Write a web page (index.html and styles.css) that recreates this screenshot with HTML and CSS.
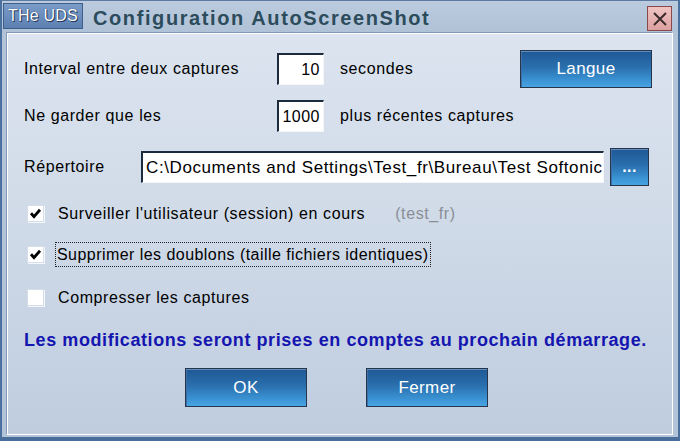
FILE: index.html
```html
<!DOCTYPE html>
<html lang="fr">
<head>
<meta charset="utf-8">
<title>Configuration AutoScreenShot</title>
<link rel="stylesheet" href="styles.css">
</head>
<body>
<div class="window">
  <div class="titlebar">
    <div class="tab">THe UDS</div>
    <div class="title">Configuration AutoScreenShot</div>
    <div class="close">
      <svg width="16" height="16" viewBox="0 0 16 16"><path d="M2 2 L14 14 M14 2 L2 14" stroke="#3a2a2a" stroke-width="2" fill="none"/></svg>
    </div>
  </div>
  <div class="client">
    <div class="row r1">
      <span class="label w1">Interval entre deux captures</span>
      <span class="field num">10</span>
      <span class="label after">secondes</span>
      <button class="btn langue">Langue</button>
    </div>
    <div class="row r2">
      <span class="label w1">Ne garder que les</span>
      <span class="field num">1000</span>
      <span class="label after">plus récentes captures</span>
    </div>
    <div class="row r3">
      <span class="label w2">Répertoire</span>
      <span class="field path">C:\Documents and Settings\Test_fr\Bureau\Test Softonic</span>
      <button class="btn dots">...</button>
    </div>
    <div class="row cb c1">
      <span class="box"><svg width="13" height="13" viewBox="0 0 13 13"><path d="M2 6.2 L5 9.6 L11 2.8" stroke="#000" stroke-width="2.8" fill="none"/></svg></span>
      <span class="label cbl">Surveiller l'utilisateur (session) en cours</span>
      <span class="label user">(test_fr)</span>
    </div>
    <div class="row cb c2">
      <span class="box"><svg width="13" height="13" viewBox="0 0 13 13"><path d="M2 6.2 L5 9.6 L11 2.8" stroke="#000" stroke-width="2.8" fill="none"/></svg></span>
      <span class="label cbl focus">Supprimer les doublons (taille fichiers identiques)</span>
    </div>
    <div class="row cb c3">
      <span class="box"></span>
      <span class="label cbl">Compresser les captures</span>
    </div>
    <div class="row note">Les modifications seront prises en comptes au prochain démarrage.</div>
    <div class="row actions">
      <button class="btn action">OK</button>
      <button class="btn action">Fermer</button>
    </div>
  </div>
</div>
</body>
</html>
```
FILE: styles.css
```css
html, body {
  margin: 0;
  padding: 0;
  background: #b3c4d9;
}
.window {
  width: 680px;
  height: 441px;
  box-sizing: border-box;
  background: #b3c4d9;
  border-left: 2px solid #4a70a0;
  border-right: 2px solid #4a70a0;
  border-top: 1px solid #5a7aa2;
  border-bottom: 4px solid #4a6e9c;
  display: flex;
  flex-direction: column;
  font-family: "Liberation Sans", Arial, sans-serif;
}
.titlebar {
  height: 31px;
  flex: none;
  display: flex;
  align-items: flex-start;
  background: linear-gradient(#bccbde, #b0c2d7);
}
.tab {
  margin: 2px 0 0 1px;
  width: 80px;
  height: 26px;
  box-sizing: border-box;
  border: 1px solid #3e5f8c;
  background: linear-gradient(#7b9cc8, #5d80b2);
  color: #fff;
  font-size: 16px;
  line-height: 24px;
  text-align center;
  text-align: center;
  text-shadow: 0 0 1px #1d3050, 1px 1px 0 #24395c;
  letter-spacing: 0.2px;
}
.title {
  margin: 4px 0 0 10px;
  font-size: 20px;
  font-weight: bold;
  letter-spacing: 1.6px;
  color: #2c4c5c;
  line-height: 26px;
}
.close {
  margin: 5px 0 0 auto;
  margin-right: 6px;
  width: 25px;
  height: 25px;
  box-sizing: border-box;
  border: 1px solid #8a4848;
  background: linear-gradient(#f0c4c4, #dca0a0);
  display: flex;
  align-items: center;
  justify-content: center;
}
.client {
  flex: 1;
  margin: 0 5px 2px 4px;
  border: 1px solid #7f97b8;
  border-right-color: #fff;
  border-bottom-color: #fff;
  box-shadow: inset 1px 1px 0 #fff;
  background: linear-gradient(#dbe4ef, #d2dce9 40%, #bfcddf);
  padding: 0 20px 0 17px;
  display: flex;
  flex-direction: column;
}
.row {
  display: flex;
  align-items: center;
}
.label {
  font-size: 16px;
  letter-spacing: 0.6px;
  color: #000;
  white-space: nowrap;
}
.w1 { width: 253px; flex: none; }
.w2 { width: 117px; flex: none; }
.after { margin-left: 16px; }
.field {
  box-sizing: border-box;
  background: #fff;
  border-top: 2px solid #1c2a3e;
  border-left: 2px solid #1c2a3e;
  border-right: 1px solid #f4f6fa;
  border-bottom: 1px solid #f4f6fa;
  font-size: 16px;
  letter-spacing: 0.5px;
  white-space: nowrap;
  overflow: hidden;
}
.num {
  width: 47px;
  height: 32px;
  line-height: 30px;
  text-align: right;
  padding-right: 3px;
}
.path {
  width: 463px;
  height: 32px;
  line-height: 30px;
  padding-left: 3px;
  font-size: 17px;
  letter-spacing: 0.6px;
}
.btn {
  font-family: "Liberation Sans", Arial, sans-serif;
  color: #fff;
  border: 1px solid #26354a;
  background: linear-gradient(#1f5894, #2a6fae 45%, #3a92d2 80%, #48a4e2);
  box-shadow: inset 0 1px 0 #5f8fc0, inset 1px 0 0 #3d6ea6;
  padding: 0;
  font-size: 17px;
  letter-spacing: 0.4px;
  cursor: default;
}
.langue {
  margin-left: auto;
  width: 132px;
  height: 38px;
}
.dots {
  margin-left: 6px;
  width: 39px;
  height: 38px;
  font-size: 16px;
  font-weight: bold;
  line-height: 30px;
}
.r1 { margin-top: 17px; height: 38px; }
.r2 { margin-top: 12px; height: 32px; }
.r3 { margin-top: 16px; height: 38px; }
.cb { height: 25px; }
.c1 { margin-top: 15px; }
.c2 { margin-top: 16px; }
.c3 { margin-top: 18px; }
.box {
  flex: none;
  width: 17px;
  height: 17px;
  box-sizing: border-box;
  margin-left: 3px;
  background: #fff;
  border: 1px solid #d4dde8;
  box-shadow: 1px 1px 0 #f4f7fb;
  display: flex;
  align-items: center;
  justify-content: center;
}
.cbl {
  margin-left: 13px;
  line-height: 23px;
  padding: 0 1px;
}
.focus {
  margin-left: 11px;
  padding: 0 1px;
  letter-spacing: 0.45px;
  border: 1px dotted #222;
}
.user {
  margin-left: 29px;
  color: #8a8e96;
}
.note {
  margin-top: 18px;
  height: 25px;
  font-size: 18px;
  font-weight: bold;
  letter-spacing: 0.58px;
  color: #1515b0;
  white-space: nowrap;
}
.actions {
  margin-top: 15px;
  padding-left: 161px;
  gap: 59px;
}
.action {
  width: 122px;
  height: 39px;
  font-size: 17px;
}
```
